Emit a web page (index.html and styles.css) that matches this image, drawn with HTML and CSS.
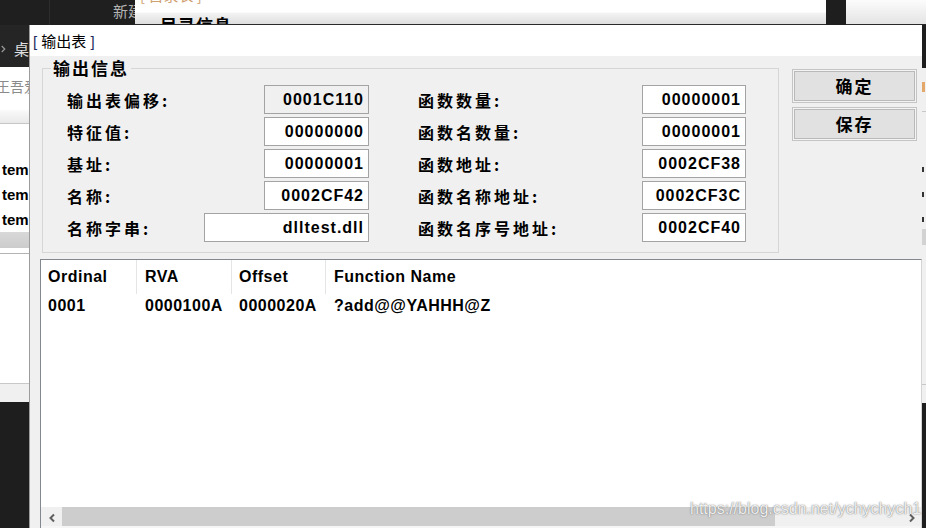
FILE: index.html
```html
<!DOCTYPE html>
<html>
<head>
<meta charset="utf-8">
<link rel="stylesheet" href="styles.css">
</head>
<body>
<div class="bg-topleft"><div class="tl-a"></div><div class="tl-b">新建</div></div>
<div class="bg-win">
  <div class="bgw-title">[ 目录表 ]</div>
  <div class="bgw-body">目录信息</div>
</div>
<div class="bg-win2"></div>
<div class="bg-left">
  <div class="bl-dark">
    <svg class="bl-chev" width="8" height="10" viewBox="0 0 8 10"><path d="M1 1 L5 5 L1 9" stroke="#9a9a9a" stroke-width="1.6" fill="none"/></svg>
    <span class="bl-desk">桌</span>
  </div>
  <div class="bl-search">王吾爱</div>
  <div class="bl-head"></div>
  <div class="bl-list">
    <div class="bl-item">tem</div>
    <div class="bl-item">tem</div>
    <div class="bl-item">tem</div>
    <div class="bl-bar"></div>
  </div>
  <div class="bl-white"></div>
  <div class="bl-light"></div>
</div>
<div class="bg-right">
  <div class="br-dark"></div>
  <div class="br-light">
    <div class="br-orange"></div>
    <div class="br-line"></div>
    <div class="br-mark m1"></div>
    <div class="br-mark"></div>
    <div class="br-mark"></div>
    <div class="br-bar"></div>
  </div>
  <div class="br-light2"></div>
</div>

<div class="dialog">
  <div class="titlebar"><span class="br">[</span> <span class="cjk">输出表</span> <span class="br">]</span></div>
  <div class="dlg-body">
    <div class="top">
      <div class="group">
        <div class="group-title">输出信息</div>
        <div class="fields">
          <div class="field"><span class="lbl">输出表偏移:</span><span class="box ro">0001C110</span></div>
          <div class="field"><span class="lbl">函数数量:</span><span class="box r">00000001</span></div>
          <div class="field"><span class="lbl">特征值:</span><span class="box">00000000</span></div>
          <div class="field"><span class="lbl">函数名数量:</span><span class="box r">00000001</span></div>
          <div class="field"><span class="lbl">基址:</span><span class="box">00000001</span></div>
          <div class="field"><span class="lbl">函数地址:</span><span class="box r">0002CF38</span></div>
          <div class="field"><span class="lbl">名称:</span><span class="box">0002CF42</span></div>
          <div class="field"><span class="lbl">函数名称地址:</span><span class="box r">0002CF3C</span></div>
          <div class="field"><span class="lbl">名称字串:</span><span class="box wide">dlltest.dll</span></div>
          <div class="field"><span class="lbl">函数名序号地址:</span><span class="box r">0002CF40</span></div>
        </div>
      </div>
      <div class="buttons">
        <div class="btn">确定</div>
        <div class="btn">保存</div>
      </div>
    </div>
    <div class="listview">
      <div class="lv-head"><span>Ordinal</span><span>RVA</span><span>Offset</span><span>Function Name</span></div>
      <div class="lv-row"><span>0001</span><span>0000100A</span><span>0000020A</span><span>?add@@YAHHH@Z</span></div>
      <div class="lv-fill"></div>
      <div class="hscroll">
        <div class="hs-btn"><svg width="8" height="10" viewBox="0 0 8 10"><path d="M6 1.5 L2.5 5 L6 8.5" stroke="#5f5f5f" stroke-width="2" fill="none"/></svg></div>
        <div class="hs-thumb"></div>
        <div class="hs-track"></div>
        <div class="hs-btn right"><svg width="8" height="10" viewBox="0 0 8 10"><path d="M2 1.5 L5.5 5 L2 8.5" stroke="#5f5f5f" stroke-width="2" fill="none"/></svg></div>
      </div>
      <div class="lv-bottom"></div>
    </div>
  </div>
</div>
<div class="watermark">https://blog.csdn.net/ychychych1</div>
</body>
</html>
```
FILE: styles.css
```css
* { box-sizing: border-box; }
html, body { margin: 0; padding: 0; }
body {
  width: 926px; height: 528px; overflow: hidden; position: relative;
  background: #1e1e1e;
  font-family: "Liberation Sans", "Noto Sans CJK SC", sans-serif;
}
.cjk { font-family: "Noto Sans CJK SC", sans-serif; }

/* background desktop pieces */
.bg-topleft { position: absolute; left: 0; top: 0; width: 135px; height: 25px; background: #1f1f1f; display: flex; }
.tl-a { width: 50px; border-right: 1px solid #2d2d2d; }
.tl-b { flex: 1; padding-left: 63px; color: #b4b4b4; font: 15px/22px "Noto Sans CJK SC", sans-serif; white-space: nowrap; overflow: hidden; }

.bg-win {
  position: absolute; left: 135px; top: 0; width: 691px; height: 25px; overflow: hidden;
  border-bottom: 1px solid #2a2a2a;
  background: linear-gradient(#ffffff 0, #ffffff 12px, #f3f3f3 13px, #dedede 24px);
}
.bgw-title { height: 14px; margin-top: -12px; padding-left: 5px; color: #cfa070; font: 15px/14px "Noto Sans CJK SC", sans-serif; }
.bgw-body { padding: 13px 0 0 25px; font: bold 17px/20px "Noto Sans CJK SC", sans-serif; letter-spacing: 1px; color: #000; }
.bg-win2 { position: absolute; left: 846px; top: 0; width: 80px; height: 25px; border-bottom: 1px solid #2a2a2a; background: linear-gradient(#fcfcfc, #e4e4e4); }

.bg-left { position: absolute; left: 0; top: 25px; width: 29px; height: 503px; display: flex; flex-direction: column; overflow: hidden; }
.bl-dark { height: 42px; background: #252526; display: flex; align-items: center; padding-top: 6px; flex: none; }
.bl-chev { margin-left: 1px; }
.bl-desk { margin-left: 7px; color: #e0e0e0; font: 15px/16px "Noto Sans CJK SC", sans-serif; }
.bl-search { height: 43px; background: #fff; color: #8a8a8a; font: 14px/16px "Noto Sans CJK SC", sans-serif; padding-top: 11px; text-indent: -4px; white-space: nowrap; flex: none; }
.bl-head { height: 14px; background: linear-gradient(#fafafa, #e9e9e9); border-bottom: 1px solid #c6c6c6; flex: none; }
.bl-list { height: 130px; background: #fff; padding-top: 33px; border-bottom: 1px solid #b4b4b4; flex: none; }
.bl-item { height: 25px; line-height: 25px; font: bold 15px/25px "Liberation Sans", sans-serif; color: #000; padding-left: 2px; white-space: nowrap; }
.bl-bar { height: 16px; background: linear-gradient(#d8d8d8, #cccccc); }
.bl-white { height: 130px; background: #fff; border-bottom: 1px solid #c8c8c8; flex: none; }
.bl-light { height: 18px; background: #f0f0f0; flex: none; }

.bg-right { position: absolute; left: 922px; top: 25px; width: 4px; height: 503px; display: flex; flex-direction: column; }
.br-dark { height: 43px; background: #1e1e1e; flex: none; }
.br-light { height: 317px; background: #f0f0f0; border-bottom: 1px solid #c8c8c8; padding-top: 14px; flex: none; }
.br-orange { height: 10px; width: 3px; background: #e3a86a; }
.br-line { height: 1px; background: #c8c8c8; margin-top: 19px; }
.br-mark { height: 5px; width: 2px; background: #333; margin-top: 20px; }
.br-mark.m1 { margin-top: 55px; }
.br-bar { height: 16px; background: #d2d2d2; margin-top: 7px; }
.br-light2 { height: 18px; background: #f0f0f0; flex: none; }

/* dialog */
.dialog {
  position: absolute; left: 29px; top: 25px; width: 893px; height: 503px;
  border-left: 1px solid #9c9c9c; background: #f0f0f0;
  display: flex; flex-direction: column;
}
.titlebar { height: 31px; flex: none; background: #fff; padding-left: 3px; font-size: 15px; line-height: 31px; color: #000; white-space: nowrap; }
.titlebar .br { color: #1d2b5c; }
.dlg-body { flex: 1; display: flex; flex-direction: column; min-height: 0; }
.top { display: flex; align-items: flex-start; flex: none; }

.group {
  position: relative; margin: 12px 0 0 12px; width: 737px; height: 185px;
  border: 1px solid #d6d6d6; padding: 16px 0 0 24px;
}
.group-title {
  position: absolute; left: 8px; top: -10px; padding: 0 2px; background: #f0f0f0;
  font: bold 17px/18px "Noto Sans CJK SC", sans-serif; letter-spacing: 2px; color: #000;
}
.fields { display: grid; grid-template-columns: 302px 328px; column-gap: 49px; row-gap: 3px; grid-auto-rows: 29px; }
.field { display: flex; align-items: center; justify-content: space-between; }
.lbl { font: bold 16px/20px "Noto Sans CJK SC", sans-serif; letter-spacing: 3px; color: #000; white-space: nowrap; }
.box {
  height: 29px; width: 105px; border: 1px solid #a3a3a3; background: #fff;
  text-align: right; padding-right: 4px;
  font: bold 16px/27px "Liberation Sans", sans-serif; letter-spacing: 1px; color: #000;
}
.box.r { width: 104px; }
.box.wide { width: 165px; }
.box.ro { background: #f0f0f0; }

.buttons { margin: 13px 0 0 13px; display: flex; flex-direction: column; gap: 4px; }
.btn {
  width: 125px; height: 34px; background: #e1e1e1;
  border: 1px solid #c4c4c4;
  box-shadow: inset 0 0 0 1px #f4f4f4, inset 0 0 0 2px #b9b9b9;
  text-align: center; font: bold 17px/32px "Noto Sans CJK SC", sans-serif; letter-spacing: 2px; color: #000;
}

.listview {
  flex: 1; min-height: 0; margin: 6px 0 0 10px;
  border-top: 1px solid #828790; border-left: 1px solid #828790; border-right: 1px solid #d4d4d4;
  background: #fff; display: flex; flex-direction: column;
}
.lv-head, .lv-row {
  display: grid; grid-template-columns: 96px 95px 94px 1fr; flex: none;
  font: bold 16px "Liberation Sans", sans-serif; letter-spacing: 0.5px; color: #000; white-space: nowrap;
}
.lv-head { height: 34px; line-height: 34px; }
.lv-head span { border-right: 1px solid #e5e5e5; padding-left: 7px; }
.lv-head span:last-child { border-right: none; }
.lv-row { height: 24px; line-height: 24px; }
.lv-row span { padding-left: 7px; }
.lv-head span:nth-child(even), .lv-row span:nth-child(even) { padding-left: 8px; }
.lv-fill { flex: 1; }
.hscroll { height: 19px; flex: none; display: flex; background: #f0f0f0; }
.hs-btn { width: 21px; display: flex; align-items: center; justify-content: center; padding-top: 2px; }
.hs-btn.right { width: 18px; }
.hs-thumb { width: 713px; background: #cdcdcd; }
.hs-track { flex: 1; }
.lv-bottom { height: 2px; flex: none; background: #f6f6f6; }

.watermark {
  position: absolute; left: 690px; top: 499px;
  font: 16px/20px "Liberation Sans", sans-serif; white-space: nowrap;
  color: rgba(255,255,255,0.88);
  text-shadow: 0 0 1px rgba(90,90,90,0.8), 0 0 2px rgba(120,120,120,0.5);
}
```
